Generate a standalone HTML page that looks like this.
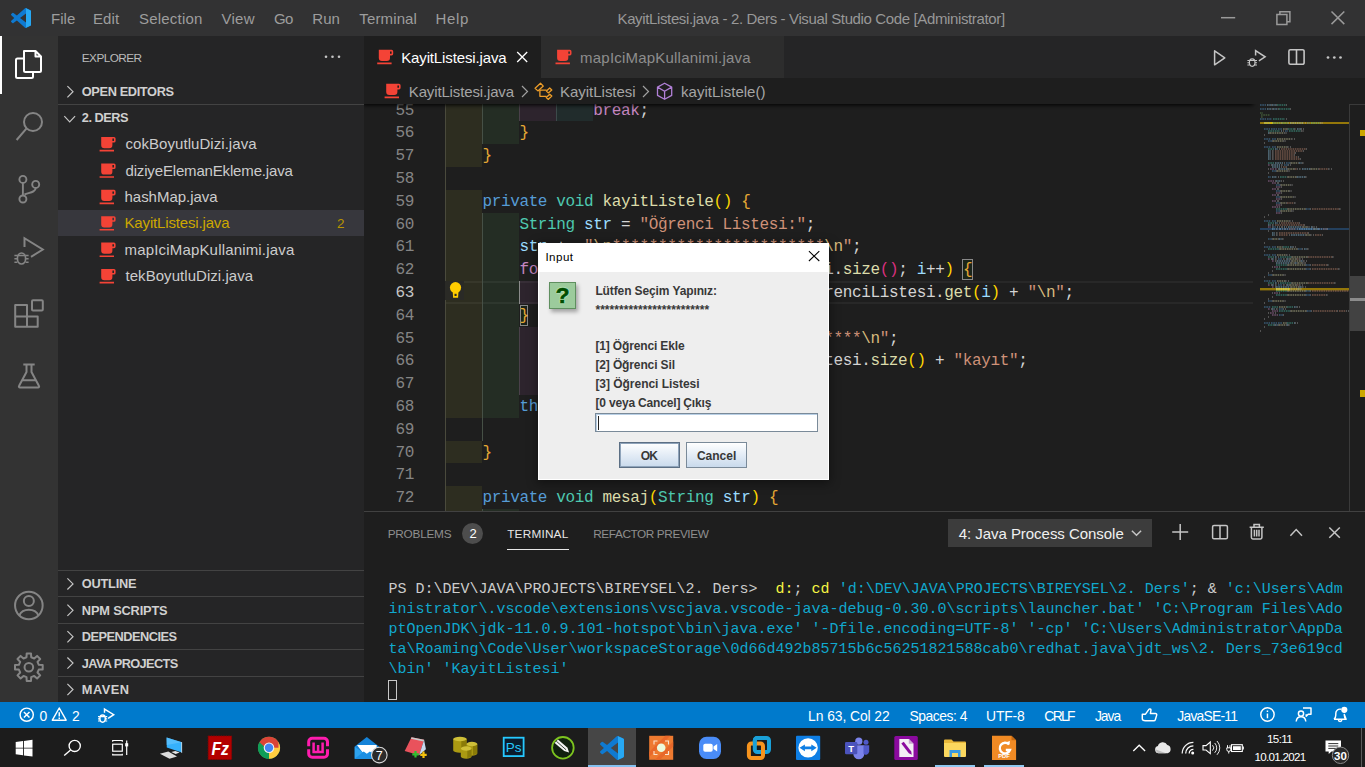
<!DOCTYPE html>
<html lang="tr"><head><meta charset="utf-8"><title>KayitListesi.java - 2. Ders - Visual Studio Code</title>
<style>
*{margin:0;padding:0;box-sizing:border-box}
html,body{width:1365px;height:767px;overflow:hidden;background:#1e1e1e}
body{position:relative;font-family:"Liberation Sans",sans-serif;color:#ccc}
.a{position:absolute}
.t{position:absolute;white-space:pre;line-height:20px;height:20px}
.m{font-family:"Liberation Mono",monospace}
svg{position:absolute;overflow:visible}
.cl{position:absolute;left:445.5px;height:22.8px;line-height:22.8px;font:16px "Liberation Mono",monospace;letter-spacing:-0.3656px;white-space:pre;color:#d4d4d4}
.ln{position:absolute;left:364px;width:50px;text-align:right;height:22.8px;line-height:22.8px;font:16px "Liberation Mono",monospace;letter-spacing:-0.3656px;color:#858585}
.k{color:#569cd6}.ty{color:#4ec9b0}.f{color:#dcdcaa}.v{color:#9cdcfe}.s{color:#ce9178}.e{color:#d7ba7d}.c{color:#c586c0}.b1{color:#ffd700}.br{color:#e6a935}.b2{color:#d9307f}.n{color:#b5cea8}
.tl{position:absolute;left:388.5px;height:20px;line-height:20px;font:15px "Liberation Mono",monospace;white-space:pre;color:#cccccc}
.cy{color:#11a8cd}.ye{color:#f5f543}
</style></head><body>
<div class="a" style="left:0px;top:0px;width:1365px;height:36px;background:#323233;"></div>
<div class="a" style="left:0px;top:36px;width:58px;height:666px;background:#333333;"></div>
<div class="a" style="left:0px;top:36px;width:2px;height:58px;background:#ffffff;"></div>
<div class="a" style="left:58px;top:36px;width:306px;height:666px;background:#252526;"></div>
<div class="a" style="left:58px;top:210px;width:306px;height:26px;background:#37373d;"></div>
<div class="a" style="left:58px;top:104px;width:306px;height:1px;background:#434343;"></div>
<div class="a" style="left:58px;top:570px;width:306px;height:1px;background:#434343;"></div>
<div class="a" style="left:58px;top:596px;width:306px;height:1px;background:#434343;"></div>
<div class="a" style="left:58px;top:623px;width:306px;height:1px;background:#434343;"></div>
<div class="a" style="left:58px;top:649px;width:306px;height:1px;background:#434343;"></div>
<div class="a" style="left:58px;top:676px;width:306px;height:1px;background:#434343;"></div>
<div class="a" style="left:364px;top:36px;width:1001px;height:42px;background:#252526;"></div>
<div class="a" style="left:364px;top:36px;width:177px;height:42px;background:#1e1e1e;"></div>
<div class="a" style="left:541px;top:36px;width:244px;height:42px;background:#2d2d2d;border-right:1px solid #252526"></div>
<div class="a" style="left:364px;top:78px;width:1001px;height:26px;background:#1e1e1e;"></div>
<div class="a" style="left:364px;top:104px;width:1001px;height:407px;background:#1e1e1e;"></div>
<div class="a" style="left:364px;top:511px;width:1001px;height:191px;background:#1e1e1e;border-top:1px solid #414141"></div>
<div class="a" style="left:0px;top:702px;width:1365px;height:26px;background:#007acc;"></div>
<div class="a" style="left:0px;top:728px;width:1365px;height:39px;background:#1c1c1c;"></div>
<div class="a" style="left:364px;top:104px;width:1001px;height:407px;overflow:hidden">
<div class="a" style="left:81.5px;top:177px;width:807.5px;height:23px;background:transparent;border-top:2px solid #282828;border-bottom:2px solid #282828"></div>
<div class="a" style="left:81.5px;top:-5px;width:36.94px;height:22px;background:rgba(255,255,64,.07);"></div>
<div class="a" style="left:118.44px;top:-5px;width:36.94px;height:22px;background:rgba(127,255,127,.07);"></div>
<div class="a" style="left:155.39px;top:-5px;width:36.94px;height:22px;background:rgba(255,127,255,.07);"></div>
<div class="a" style="left:192.33px;top:-5px;width:36.94px;height:22px;background:rgba(79,236,236,.07);"></div>
<div class="a" style="left:81.5px;top:17px;width:36.94px;height:23px;background:rgba(255,255,64,.07);"></div>
<div class="a" style="left:118.44px;top:17px;width:36.94px;height:23px;background:rgba(127,255,127,.07);"></div>
<div class="a" style="left:81.5px;top:40px;width:36.94px;height:23px;background:rgba(255,255,64,.07);"></div>
<div class="a" style="left:81.5px;top:86px;width:36.94px;height:23px;background:rgba(255,255,64,.07);"></div>
<div class="a" style="left:81.5px;top:109px;width:36.94px;height:22px;background:rgba(255,255,64,.07);"></div>
<div class="a" style="left:118.44px;top:109px;width:36.94px;height:22px;background:rgba(127,255,127,.07);"></div>
<div class="a" style="left:81.5px;top:131px;width:36.94px;height:23px;background:rgba(255,255,64,.07);"></div>
<div class="a" style="left:118.44px;top:131px;width:36.94px;height:23px;background:rgba(127,255,127,.07);"></div>
<div class="a" style="left:81.5px;top:154px;width:36.94px;height:23px;background:rgba(255,255,64,.07);"></div>
<div class="a" style="left:118.44px;top:154px;width:36.94px;height:23px;background:rgba(127,255,127,.07);"></div>
<div class="a" style="left:81.5px;top:177px;width:36.94px;height:23px;background:rgba(255,255,64,.07);"></div>
<div class="a" style="left:118.44px;top:177px;width:36.94px;height:23px;background:rgba(127,255,127,.07);"></div>
<div class="a" style="left:155.39px;top:177px;width:36.94px;height:23px;background:rgba(255,127,255,.07);"></div>
<div class="a" style="left:81.5px;top:200px;width:36.94px;height:23px;background:rgba(255,255,64,.07);"></div>
<div class="a" style="left:118.44px;top:200px;width:36.94px;height:23px;background:rgba(127,255,127,.07);"></div>
<div class="a" style="left:81.5px;top:223px;width:36.94px;height:22px;background:rgba(255,255,64,.07);"></div>
<div class="a" style="left:118.44px;top:223px;width:36.94px;height:22px;background:rgba(127,255,127,.07);"></div>
<div class="a" style="left:155.39px;top:223px;width:36.94px;height:22px;background:rgba(255,127,255,.07);"></div>
<div class="a" style="left:81.5px;top:245px;width:36.94px;height:23px;background:rgba(255,255,64,.07);"></div>
<div class="a" style="left:118.44px;top:245px;width:36.94px;height:23px;background:rgba(127,255,127,.07);"></div>
<div class="a" style="left:155.39px;top:245px;width:36.94px;height:23px;background:rgba(255,127,255,.07);"></div>
<div class="a" style="left:81.5px;top:268px;width:36.94px;height:23px;background:rgba(255,255,64,.07);"></div>
<div class="a" style="left:118.44px;top:268px;width:36.94px;height:23px;background:rgba(127,255,127,.07);"></div>
<div class="a" style="left:155.39px;top:268px;width:36.94px;height:23px;background:rgba(255,127,255,.07);"></div>
<div class="a" style="left:81.5px;top:291px;width:36.94px;height:23px;background:rgba(255,255,64,.07);"></div>
<div class="a" style="left:118.44px;top:291px;width:36.94px;height:23px;background:rgba(127,255,127,.07);"></div>
<div class="a" style="left:81.5px;top:337px;width:36.94px;height:22px;background:rgba(255,255,64,.07);"></div>
<div class="a" style="left:81.5px;top:382px;width:36.94px;height:23px;background:rgba(255,255,64,.07);"></div>
<div class="a" style="left:81.5px;top:405px;width:36.94px;height:23px;background:rgba(255,255,64,.07);"></div>
<div class="a" style="left:118.44px;top:405px;width:36.94px;height:23px;background:rgba(127,255,127,.07);"></div>
<div class="a" style="left:81.0px;top:-5px;width:1px;height:22px;background:#4a4a3c;"></div>
<div class="a" style="left:117.94px;top:-5px;width:1px;height:22px;background:#465046;"></div>
<div class="a" style="left:154.89px;top:-5px;width:1px;height:22px;background:#4a404a;"></div>
<div class="a" style="left:191.83px;top:-5px;width:1px;height:22px;background:#3c4a4a;"></div>
<div class="a" style="left:81.0px;top:17px;width:1px;height:23px;background:#4a4a3c;"></div>
<div class="a" style="left:117.94px;top:17px;width:1px;height:23px;background:#465046;"></div>
<div class="a" style="left:81.0px;top:40px;width:1px;height:23px;background:#4a4a3c;"></div>
<div class="a" style="left:81.0px;top:63px;width:1px;height:23px;background:#4a4a3c;"></div>
<div class="a" style="left:81.0px;top:86px;width:1px;height:23px;background:#4a4a3c;"></div>
<div class="a" style="left:81.0px;top:109px;width:1px;height:22px;background:#4a4a3c;"></div>
<div class="a" style="left:117.94px;top:109px;width:1px;height:22px;background:#465046;"></div>
<div class="a" style="left:81.0px;top:131px;width:1px;height:23px;background:#4a4a3c;"></div>
<div class="a" style="left:117.94px;top:131px;width:1px;height:23px;background:#465046;"></div>
<div class="a" style="left:81.0px;top:154px;width:1px;height:23px;background:#4a4a3c;"></div>
<div class="a" style="left:117.94px;top:154px;width:1px;height:23px;background:#465046;"></div>
<div class="a" style="left:81.0px;top:177px;width:1px;height:23px;background:#4a4a3c;"></div>
<div class="a" style="left:117.94px;top:177px;width:1px;height:23px;background:#465046;"></div>
<div class="a" style="left:154.89px;top:177px;width:1px;height:23px;background:#8a8a8a;"></div>
<div class="a" style="left:81.0px;top:200px;width:1px;height:23px;background:#4a4a3c;"></div>
<div class="a" style="left:117.94px;top:200px;width:1px;height:23px;background:#465046;"></div>
<div class="a" style="left:81.0px;top:223px;width:1px;height:22px;background:#4a4a3c;"></div>
<div class="a" style="left:117.94px;top:223px;width:1px;height:22px;background:#465046;"></div>
<div class="a" style="left:154.89px;top:223px;width:1px;height:22px;background:#4a404a;"></div>
<div class="a" style="left:81.0px;top:245px;width:1px;height:23px;background:#4a4a3c;"></div>
<div class="a" style="left:117.94px;top:245px;width:1px;height:23px;background:#465046;"></div>
<div class="a" style="left:154.89px;top:245px;width:1px;height:23px;background:#4a404a;"></div>
<div class="a" style="left:81.0px;top:268px;width:1px;height:23px;background:#4a4a3c;"></div>
<div class="a" style="left:117.94px;top:268px;width:1px;height:23px;background:#465046;"></div>
<div class="a" style="left:154.89px;top:268px;width:1px;height:23px;background:#4a404a;"></div>
<div class="a" style="left:81.0px;top:291px;width:1px;height:23px;background:#4a4a3c;"></div>
<div class="a" style="left:117.94px;top:291px;width:1px;height:23px;background:#465046;"></div>
<div class="a" style="left:81.0px;top:314px;width:1px;height:23px;background:#4a4a3c;"></div>
<div class="a" style="left:117.94px;top:314px;width:1px;height:23px;background:#465046;"></div>
<div class="a" style="left:81.0px;top:337px;width:1px;height:22px;background:#4a4a3c;"></div>
<div class="a" style="left:81.0px;top:359px;width:1px;height:23px;background:#4a4a3c;"></div>
<div class="a" style="left:81.0px;top:382px;width:1px;height:23px;background:#4a4a3c;"></div>
<div class="a" style="left:81.0px;top:405px;width:1px;height:23px;background:#4a4a3c;"></div>
<div class="a" style="left:117.94px;top:405px;width:1px;height:23px;background:#465046;"></div>
<div class="a" style="left:598.32px;top:154.5px;width:10.24px;height:21.8px;background:rgba(0,100,0,0.1);border:1px solid #888"></div>
<div class="a" style="left:155.99px;top:201px;width:8.04px;height:20.8px;background:rgba(0,100,0,0.1);border:1px solid #888"></div>
<div class="ln" style="left:0;top:-2.5px;color:#858585">55</div>
<div class="cl" style="left:81.5px;top:-2.5px">                <span class="c">break</span>;</div>
<div class="ln" style="left:0;top:19.5px;color:#858585">56</div>
<div class="cl" style="left:81.5px;top:19.5px">        <span class="br">}</span></div>
<div class="ln" style="left:0;top:42.5px;color:#858585">57</div>
<div class="cl" style="left:81.5px;top:42.5px">    <span class="br">}</span></div>
<div class="ln" style="left:0;top:65.5px;color:#858585">58</div>
<div class="ln" style="left:0;top:88.5px;color:#858585">59</div>
<div class="cl" style="left:81.5px;top:88.5px">    <span class="k">private</span> <span class="ty">void</span> <span class="f">kayitListele</span><span class="b1">()</span> <span class="br">{</span></div>
<div class="ln" style="left:0;top:111.5px;color:#858585">60</div>
<div class="cl" style="left:81.5px;top:111.5px">        <span class="ty">String</span> <span class="v">str</span> = <span class="s">"Öğrenci Listesi:"</span>;</div>
<div class="ln" style="left:0;top:133.5px;color:#858585">61</div>
<div class="cl" style="left:81.5px;top:133.5px">        <span class="v">str</span> += <span class="s">"</span><span class="e">\n</span><span class="s">***********************</span><span class="e">\n</span><span class="s">"</span>;</div>
<div class="ln" style="left:0;top:156.5px;color:#858585">62</div>
<div class="cl" style="left:81.5px;top:156.5px">        <span class="c">for</span> <span class="b1">(</span><span class="ty">int</span> <span class="v">i</span> = <span class="n">0</span>; <span class="v">i</span> &lt; ogrenciListesi.<span class="f">size</span><span class="b2">()</span>; <span class="v">i</span>++<span class="b1">)</span> <span class="br">{</span></div>
<div class="ln" style="left:0;top:179.5px;color:#c6c6c6">63</div>
<div class="cl" style="left:81.5px;top:179.5px">            <span class="v">str</span> += <span class="b1">(</span><span class="v">i</span> + <span class="n">1</span><span class="b1">)</span> + <span class="s">" --&gt; "</span> + ogrenciListesi.<span class="f">get</span><span class="b1">(</span><span class="v">i</span><span class="b1">)</span> + <span class="s">"</span><span class="e">\n</span><span class="s">"</span>;</div>
<div class="ln" style="left:0;top:202.5px;color:#858585">64</div>
<div class="cl" style="left:81.5px;top:202.5px">        <span class="br">}</span></div>
<div class="ln" style="left:0;top:225.5px;color:#858585">65</div>
<div class="cl" style="left:81.5px;top:225.5px">            <span class="v">str</span> += <span class="s">"*************************</span><span class="e">\n</span><span class="s">"</span>;</div>
<div class="ln" style="left:0;top:247.5px;color:#858585">66</div>
<div class="cl" style="left:81.5px;top:247.5px">            <span class="v">str</span> += <span class="s">"Toplam "</span> + ogrenciListesi.<span class="f">size</span><span class="b1">()</span> + <span class="s">"kayıt"</span>;</div>
<div class="ln" style="left:0;top:270.5px;color:#858585">67</div>
<div class="ln" style="left:0;top:293.5px;color:#858585">68</div>
<div class="cl" style="left:81.5px;top:293.5px">        <span class="k">this</span>.<span class="f">mesaj</span><span class="b1">(</span><span class="v">str</span><span class="b1">)</span>;</div>
<div class="ln" style="left:0;top:316.5px;color:#858585">69</div>
<div class="ln" style="left:0;top:339.5px;color:#858585">70</div>
<div class="cl" style="left:81.5px;top:339.5px">    <span class="br">}</span></div>
<div class="ln" style="left:0;top:361.5px;color:#858585">71</div>
<div class="ln" style="left:0;top:384.5px;color:#858585">72</div>
<div class="cl" style="left:81.5px;top:384.5px">    <span class="k">private</span> <span class="ty">void</span> <span class="f">mesaj</span><span class="b1">(</span><span class="ty">String</span> <span class="v">str</span><span class="b1">)</span> <span class="br">{</span></div>
<div class="ln" style="left:0;top:407.5px;color:#858585">73</div>
<div class="a" style="left:81px;top:177px;width:19px;height:19px;background:#2a2a26;"></div>
<svg style="left:81px;top:177px" width="19" height="19" viewBox="445 281 19 19"><circle cx="455.5" cy="287.6" r="5.6" fill="#ffcc00"/><path d="M452.700 290.500h5.800l-.4 7.200h-5z" fill="#ffcc00"/><rect x="454.500" y="293.800" width="2.100" height="2.200" fill="#2a2a26"/></svg>
<div class="a" style="left:0;top:-6px;width:888px;height:6px;box-shadow:0 0 4px 1px #000"></div>
</div>
<svg style="left:1260px;top:104px" width="89" height="240" viewBox="0 0 89 240">
<rect x="0" y="18" width="89" height="2" fill="#94770a"/><rect x="4" y="18" width="9" height="2" fill="#d8b000"/>
<rect x="0" y="184" width="89" height="2.4" fill="#94770a"/><rect x="16" y="184" width="14" height="2.4" fill="#d8b000"/>
<rect x="0" y="124" width="89" height="2" fill="#264f78" opacity=".7"/>
<path d="M0 1h6M0 5h6M0 15h6M7 15h5M4 19h7M47 19h3M4 25h6M11 25h6M18 25h4M25 27h3M4 35h7M12 35h4M8 37h4M4 43h7M12 43h4M26 59h4M24 61h4M12 67h4M8 73h3M16 81h4M16 87h4M16 93h4M16 99h4M46 105h4M16 107h4M4 117h7M12 117h4M13 123h3M8 135h4M4 143h7M12 143h4M38 145h4M4 151h7M12 151h4M18 155h4M46 161h4M46 165h4M8 171h4M4 177h7M12 177h4M18 181h4M46 187h4M46 191h4M8 197h4M4 203h7M19 205h4M47 207h4M19 211h4M4 219h6M11 219h6M18 219h4" stroke="#569cd6" stroke-width="1.1" opacity=".7" stroke-dasharray="1.6 .7" fill="none"/>
<path d="M8 61h2M10 65h4M15 65h2M8 77h6M12 79h4M16 83h5M12 85h4M16 89h5M12 91h4M16 95h5M12 97h4M16 101h5M12 103h7M16 109h5M8 123h3M8 155h2M12 157h2M14 163h4M8 181h2M12 183h2M14 189h4M8 205h2M12 207h6M10 209h4M12 211h6" stroke="#c586c0" stroke-width="1.1" opacity=".7" stroke-dasharray="1.6 .7" fill="none"/>
<path d="M17 1h9M19 5h11M13 15h12M12 19h9M22 19h6M51 19h9M28 25h6M8 27h12M29 27h12M8 45h6M8 59h6M20 73h7M16 105h11M8 119h6M23 143h6M8 145h11M8 153h6M20 153h11M16 161h11M16 165h11M8 179h6M20 179h11M16 187h11M16 191h11M12 203h6M27 203h6M19 207h11M27 219h6M8 221h6" stroke="#4ec9b0" stroke-width="1.1" opacity=".7" stroke-dasharray="1.6 .7" fill="none"/>
<path d="M23 25h4M10 29h14M17 35h14M13 37h10M17 43h10M31 59h7M28 65h6M51 65h7M17 67h10M28 73h8M21 81h9M21 87h8M21 93h12M21 99h5M28 105h17M21 107h10M17 117h12M43 123h4M54 125h3M46 131h4M13 135h5M17 143h5M20 145h17M17 151h9M32 153h15M30 155h6M32 157h8M31 159h3M38 159h4M28 161h17M28 165h17M13 171h10M17 177h8M32 179h15M30 181h6M31 183h8M31 185h6M28 187h17M28 191h17M13 197h10M19 203h7M31 207h15M23 219h3M19 221h7" stroke="#dcdcaa" stroke-width="1.1" opacity=".7" stroke-dasharray="1.6 .7" fill="none"/>
<path d="M7 1h4M12 1h4M7 5h5M13 5h5M30 19h14M37 25h4M21 27h1M8 29h1M15 45h3M8 47h3M8 49h3M8 51h3M8 53h3M8 55h3M15 59h8M39 59h3M12 61h8M12 63h8M19 65h8M42 65h8M12 73h5M37 73h8M16 77h5M15 119h3M8 121h3M17 123h1M24 123h1M28 123h14M51 123h1M12 125h3M20 125h1M39 125h14M58 125h1M12 129h3M12 131h3M31 131h14M19 135h3M30 143h3M44 145h3M15 153h2M12 155h2M27 155h2M17 157h14M41 157h2M16 159h14M35 159h2M15 179h2M12 181h2M27 181h2M16 183h14M40 183h2M16 185h14M38 185h2M34 203h3M12 205h3M34 219h1M15 221h3M27 221h1" stroke="#9cdcfe" stroke-width="1.1" opacity=".7" stroke-dasharray="1.6 .7" fill="none"/>
<path d="M21 45h25M15 47h28M15 49h20M15 51h19M15 53h23M15 55h25M23 63h3M35 65h2M59 65h9M27 99h7M52 105h27M21 119h18M15 121h29M29 125h7M63 125h4M19 129h29M19 131h9M55 131h7M48 153h24M37 155h2M52 161h15M52 165h26M48 179h26M37 181h2M52 187h37M52 191h14M53 207h24M79 207h7" stroke="#ce9178" stroke-width="1.1" opacity=".7" stroke-dasharray="1.6 .7" fill="none"/>
<path d="M11 1h1M16 1h1M26 1h1M12 5h1M18 5h1M30 5h1M26 15h1M21 19h1M28 19h1M45 19h1M60 19h3M27 25h1M34 25h2M41 25h1M43 25h1M23 27h1M41 27h3M9 29h1M24 29h3M4 31h1M31 35h2M34 35h1M12 37h1M23 37h3M4 39h1M27 43h2M30 43h1M19 45h1M46 45h1M12 47h2M43 47h1M12 49h2M35 49h1M12 51h2M34 51h1M12 53h2M38 53h1M12 55h2M40 55h1M24 59h1M30 59h1M38 59h1M42 59h2M11 61h1M21 61h2M28 61h1M30 61h1M21 63h1M26 63h1M8 65h1M18 65h1M27 65h1M34 65h1M37 65h1M39 65h2M50 65h1M58 65h1M68 65h2M71 65h1M16 67h1M27 67h3M8 69h1M18 73h1M27 73h1M36 73h1M45 73h2M15 77h1M21 77h1M23 77h1M17 79h1M18 79h1M20 81h1M30 81h3M21 83h1M17 85h1M18 85h1M20 87h1M29 87h3M21 89h1M17 91h1M18 91h1M20 93h1M33 93h3M21 95h1M17 97h1M18 97h1M20 99h1M26 99h1M34 99h2M21 101h1M19 103h1M27 105h1M45 105h1M50 105h1M79 105h2M20 107h1M31 107h3M21 109h1M8 111h1M4 113h1M29 117h2M32 117h1M19 119h1M39 119h1M12 121h2M44 121h1M12 123h1M19 123h1M21 123h1M22 123h1M26 123h1M42 123h1M47 123h3M52 123h3M56 123h1M16 125h2M19 125h1M22 125h1M24 125h1M25 125h1M27 125h1M37 125h1M53 125h1M57 125h1M59 125h1M61 125h1M67 125h1M8 127h1M16 129h2M48 129h1M16 131h2M29 131h1M45 131h1M50 131h2M53 131h1M62 131h1M12 135h1M18 135h1M22 135h2M4 139h1M22 143h1M33 143h1M35 143h1M19 145h1M37 145h1M42 145h1M47 145h2M4 147h1M26 151h2M29 151h1M18 153h1M31 153h1M47 153h1M72 153h2M11 155h1M15 155h2M23 155h2M26 155h1M29 155h1M36 155h1M39 155h2M42 155h1M15 157h2M31 157h1M40 157h1M43 157h2M46 157h1M30 159h1M34 159h1M37 159h1M42 159h4M27 161h1M45 161h1M50 161h1M67 161h2M12 163h1M19 163h1M27 165h1M45 165h1M50 165h1M78 165h2M12 167h1M8 169h1M12 171h1M23 171h3M4 173h1M25 177h2M28 177h1M18 179h1M31 179h1M47 179h1M74 179h2M11 181h1M15 181h2M23 181h2M26 181h1M29 181h1M36 181h1M39 181h2M42 181h1M15 183h1M30 183h1M39 183h1M42 183h2M45 183h1M30 185h1M37 185h1M40 185h2M27 187h1M45 187h1M50 187h1M12 189h1M19 189h1M27 191h1M45 191h1M50 191h1M66 191h2M12 193h1M8 195h1M12 197h1M23 197h3M4 199h1M26 203h1M37 203h1M39 203h1M11 205h1M16 205h2M23 205h1M25 205h1M30 207h1M46 207h1M51 207h1M77 207h1M86 207h1M88 207h1M8 209h1M15 209h1M23 211h1M8 213h1M4 215h1M26 219h1M35 219h1M37 219h1M14 221h1M18 221h1M26 221h1M28 221h2M4 223h1M0 227h1" stroke="#b4b4b4" stroke-width="1.1" opacity=".7" stroke-dasharray="1.6 .7" fill="none"/>
<path d="M0 9h3M1 11h9M1 13h2" stroke="#6a9955" stroke-width="1.1" opacity=".7" stroke-dasharray="1.6 .7" fill="none"/>
</svg>
<div class="a" style="left:1349px;top:104px;width:16px;height:407px;background:#1e1e1e;border-left:1px solid #3a3a3a;border-top:1px solid #3a3a3a"></div>
<div class="a" style="left:1350px;top:275.6px;width:15px;height:55.2px;background:#424242;"></div>
<div class="a" style="left:1350px;top:298px;width:15px;height:2.5px;background:#8c8c8c;"></div>
<div class="a" style="left:1360.4px;top:130.4px;width:4.6px;height:5.4px;background:#cca700;"></div>
<div class="a" style="left:1360.4px;top:390.2px;width:4.6px;height:6.7px;background:#cca700;"></div>
<div class="a" style="left:461.9px;top:522.9px;width:21.4px;height:21.4px;background:#4d4d4d;border-radius:11px"></div>
<div class="a" style="left:507.2px;top:549px;width:61.5px;height:1px;background:#e7e7e7;"></div>
<div class="a" style="left:948px;top:519px;width:204px;height:28px;background:#3c3c3c;"></div>
<div class="tl" style="top:581px">PS D:\DEV\JAVA\PROJECTS\BIREYSEL\2. Ders&gt;  <span class="ye">d:</span>; <span class="ye">cd</span> <span class="cy">'d:\DEV\JAVA\PROJECTS\BIREYSEL\2. Ders'</span>; &amp; <span class="cy">'c:\Users\Adm</span></div>
<div class="tl" style="top:601px"><span class="cy">inistrator\.vscode\extensions\vscjava.vscode-java-debug-0.30.0\scripts\launcher.bat' 'C:\Program Files\Ado</span></div>
<div class="tl" style="top:621px"><span class="cy">ptOpenJDK\jdk-11.0.9.101-hotspot\bin\java.exe' '-Dfile.encoding=UTF-8' '-cp' 'C:\Users\Administrator\AppDa</span></div>
<div class="tl" style="top:641px"><span class="cy">ta\Roaming\Code\User\workspaceStorage\0d66d492b85715b6c56251821588cab0\redhat.java\jdt_ws\2. Ders_73e619cd</span></div>
<div class="tl" style="top:661px"><span class="cy">\bin' 'KayitListesi'</span></div>
<div class="a" style="left:388px;top:680px;width:9px;height:20px;background:transparent;border:1px solid #c8c8c8"></div>
<div class="a" style="left:588px;top:728px;width:48px;height:39px;background:#464646;"></div>
<div class="a" style="left:588px;top:765.4px;width:48px;height:1.6px;background:#85c1f0;"></div>
<div class="a" style="left:935.2px;top:765.4px;width:40.3px;height:1.6px;background:#8fc8f0;"></div>
<div class="a" style="left:984.3px;top:765.4px;width:39.7px;height:1.6px;background:#8fc8f0;"></div>
<div class="a" style="left:1361px;top:728px;width:1px;height:39px;background:#5a5a5a;"></div>
<svg class="a" style="left:0;top:0" width="1365" height="767" viewBox="0 0 1365 767" fill="none" font-family="Liberation Sans, sans-serif">
<path d="M15.700 742l7.300-1v6.700h-7.300zM23.900 740.900l8.600-1.200v8h-8.600zM15.700 748.600h7.300v6.700l-7.300-1zM23.900 748.600h8.600v8l-8.600-1.200z" fill="#fff"/>
<g stroke="#fff" stroke-width="1.350"><circle cx="74.700" cy="745.900" r="5.600"/><path d="M70.600 749.900L64.200 755.600"/></g>
<g stroke="#fff" stroke-width="1.200"><rect x="112.700" y="744.200" width="9.600" height="7"/><path d="M112.700 741.700v-1.200h9.600v1.200M112.700 753.700v1.200h9.600v-1.200M126.700 740.500v14.400"/></g><rect x="125.200" y="743.200" width="3" height="3.200" fill="#fff"/>
<path d="M166.600 737.400l15.200 4.800v10.400l-15-5z" fill="#35b0fb"/><path d="M166.600 737.400l15.200 4.800-15.100 2.800z" fill="#5cc1fc" opacity=".8"/><path d="M181.300 742v10.600l.8.300v-10.600z" fill="#d9e6ee"/><path d="M171.300 752.100l4-1.100 4.300 1.600-3.900 1.300z" fill="#e6e6e6"/><path d="M159.900 753.700l8.400-2.100 8.700 5-7.500 2.100z" fill="#dcdcdc"/>
<rect x="208.200" y="736" width="23.400" height="23.500" fill="#b30000" stroke="#8e0000" stroke-width="1" stroke-dasharray="1.500 1"/><text x="211.500" y="755" font-size="19" font-weight="bold" font-style="italic" fill="#fff" textLength="17.500" lengthAdjust="spacingAndGlyphs">Fz</text>
<circle cx="269" cy="747.8" r="11" fill="#4caf50"/><path d="M269 747.8L259.47 742.3A11 11 0 0 1 278.53 742.3z" fill="#db4437"/><path d="M269 747.8L278.53 742.3A11 11 0 0 1 269 758.8z" fill="#ffcd40"/><path d="M269 747.8L259.47 742.3A11 11 0 0 0 269 758.8z" fill="#0f9d58"/><path d="M259.47 742.3h19.060v5.500h-13z" fill="#db4437"/><circle cx="269" cy="747.8" r="5.300" fill="#f1f1f1"/><circle cx="269" cy="747.8" r="4.200" fill="#4285f4"/>
<g stroke="#ff1cae" stroke-width="3"><path d="M308.700 746.300v-4.500a3.500 3.500 0 0 1 3.500-3.500h11.800a3.500 3.500 0 0 1 3.500 3.500v4.500M308.700 749.300v4.500a3.500 3.500 0 0 0 3.500 3.500h11.800a3.500 3.500 0 0 0 3.500-3.500v-4.500"/><path d="M313.600 742.500v9.500h9v-9.500M318.100 745v7" stroke-width="2.500"/></g>
<path d="M354.700 746.500l12.100-9.500 12.100 9.500v12.300h-24.200z" fill="#1583d8"/><path d="M357 745h19.600v8l-9.800 5z" fill="#fff"/><path d="M354.700 746.800l12.100 8.200 12.100-8.200v12h-24.200z" fill="#2ea3ee"/><path d="M354.700 758.800l9-7.200 3.100 2.100 3.100-2.100 9 7.200z" fill="#1a8fe3"/>
<circle cx="379.300" cy="755.100" r="7.800" fill="#2b2b2b" stroke="#d8d8d8" stroke-width="1.100"/><text x="379.300" y="759.600" font-size="12.500" fill="#fff" text-anchor="middle">7</text>
<path d="M411.500 737.200l12.600 2.600-5 15.500-14.400-4.200z" fill="#e9525c"/><path d="M411.500 737.200l12.600 2.600-.5 1.600-12.700-2.600z" fill="#c9c9c9"/><path d="M424.100 739.800l1.800 9.500-6.800 6z" fill="#c7d8ee"/><path d="M412.300 754.300h6.400M415.500 751.100v6.400" stroke="#2fbf2f" stroke-width="2.200"/><path d="M420.300 754.800h6.400M423.500 751.600v6.400" stroke="#f4c20d" stroke-width="2.200"/>
<path d="M453.2 739v11.5a6.75 2.2 0 0 0 13.5 0v-11.5z" fill="#ab9a12"/><path d="M461.3 739v13.0a6.75 2.2 0 0 0 5.4 -1.500v-11.5z" fill="#6f6200" opacity=".55"/><ellipse cx="459.95" cy="739" rx="6.75" ry="2.2" fill="#cfc038"/>
<path d="M466.5 744v9.5a5.4 2.2 0 0 0 10.8 0v-9.5z" fill="#ab9a12"/><path d="M472.98 744v11.0a5.4 2.2 0 0 0 4.32 -1.500v-9.5z" fill="#6f6200" opacity=".55"/><ellipse cx="471.9" cy="744" rx="5.4" ry="2.2" fill="#cfc038"/>
<path d="M460.8 748.5v8a5.4 2.2 0 0 0 10.8 0v-8z" fill="#ab9a12"/><path d="M467.28000000000003 748.5v9.5a5.4 2.2 0 0 0 4.32 -1.500v-8z" fill="#6f6200" opacity=".55"/><ellipse cx="466.2" cy="748.5" rx="5.4" ry="2.2" fill="#cfc038"/>
<rect x="503.700" y="737.700" width="19.900" height="18.400" fill="#0b1c2c" stroke="#26c9ff" stroke-width="1.800"/><text x="513.650" y="752" font-size="13.500" fill="#26c9ff" text-anchor="middle">Ps</text>
<circle cx="562.900" cy="747.800" r="10.800" fill="#10200f" stroke="#7dc41f" stroke-width="1.800"/><path d="M554.600 743l3.400-3.600 9.500 8.300 1.600 4.700-4.900-1.300z" fill="#f2f2f2"/><path d="M556.300 741.200l9.800 8.600" stroke="#10200f" stroke-width=".8"/>
<g transform="translate(600 736) scale(0.2400)"><path d="M96.5 10.8 75.9.9a6.2 6.2 0 0 0-7.1 1.2L29.4 38 12.2 25a4.2 4.2 0 0 0-5.3.2L1.4 30.3a4.2 4.2 0 0 0 0 6.2L16.2 50 1.4 63.5a4.2 4.2 0 0 0 0 6.2l5.5 5a4.2 4.2 0 0 0 5.3.3l17.2-13 39.4 35.9a6.2 6.2 0 0 0 7.1 1.2l20.6-9.9a6.2 6.2 0 0 0 3.500-5.6V16.400a6.200 6.200 0 0 0-3.500-5.600ZM75 72.700 45.100 50 75 27.300Z" fill="#0f7ad1"/><path d="M75.900 .9 96.500 10.800a6.200 6.200 0 0 1 3.500 5.600v67.200a6.200 6.200 0 0 1-3.500 5.600l-20.600 9.900a6.200 6.200 0 0 1-3.400.5c1.500-.400 2.500-1.800 2.500-3.400V3.800c0-1.600-1-3-2.500-3.400a6.200 6.200 0 0 1 3.400.5z" fill="#27a8f3"/></g>
<rect x="649.200" y="735.800" width="24" height="24" fill="#ee7a30"/><path d="M649.200 752l16.200-16.200h5l-21.200 21.200zM655 759.800l18.200-18.200v5l-13.200 13.200z" fill="#e8682a"/><circle cx="661.200" cy="747.800" r="4.300" fill="#ecfbdc"/><path d="M654 744.500v-3.500h3.500M665 741h3.500v3.500M668.500 751v3.500h-3.500M657.500 754.500h-3.500v-3.500" stroke="#fbe3cf" stroke-width="1.100"/>
<rect x="699" y="736.800" width="22" height="22.200" rx="7.500" fill="#4a8cf7"/><rect x="703.300" y="743.700" width="9.400" height="8" rx="1.800" fill="#fff"/><path d="M713.500 746.600l3.700-2.500v7.400l-3.700-2.500z" fill="#fff"/>
<rect x="754.800" y="738" width="14.200" height="14" rx="2.500" stroke="#1aa0d8" stroke-width="4"/><rect x="748.900" y="743.500" width="14.100" height="14.500" rx="2.500" stroke="#f7941d" stroke-width="4"/><path d="M754.800 746v-5.500a2.500 2.500 0 0 1 2.500-2.500h5" stroke="#1aa0d8" stroke-width="4"/>
<rect x="796" y="735.700" width="24.200" height="24.300" rx="1" fill="#0e7ee4"/><circle cx="808.100" cy="747.850" r="9.700" fill="#fff"/><path d="M799.500 747.850l5.400-3.300v2h6.400v-2l5.400 3.300-5.400 3.300v-2h-6.400v2z" fill="#0e7ee4"/>
<circle cx="858.800" cy="741.200" r="3.600" fill="#7b83eb"/><circle cx="866" cy="742.300" r="2.500" fill="#5059c9"/><path d="M852.500 745.300h11.800v8.500a5.500 5.500 0 0 1-11 0z" fill="#7b83eb"/><path d="M863.500 745.300h5.700v6.200a3.600 3.600 0 0 1-5.700 2.500z" fill="#5059c9"/><rect x="845" y="742" width="12.300" height="12.300" rx="1.200" fill="#4b53bc"/><text x="851.150" y="752" font-size="9.500" font-weight="bold" fill="#fff" text-anchor="middle">T</text>
<rect x="894.300" y="735.900" width="23.500" height="24.100" rx="1.500" fill="#8b0a9e"/><path d="M899.300 739h9.500l4.700 4.700v13.300h-14.200z" fill="#f4eef5"/><path d="M908.800 739v4.700h4.700z" fill="#c9a3cf"/><path d="M901.300 743.500l2.400-1.800 7.500 9.800.6 3.200-3-1.400z" fill="#8b0a9e"/>
<path d="M944 740.500a1 1 0 0 1 1-1h6.500l2 2h11.500a1 1 0 0 1 1 1v13.500h-22z" fill="#e9b83a"/><path d="M944 743h22v13a1 1 0 0 1-1 1h-20a1 1 0 0 1-1-1z" fill="#fbd75e"/><path d="M949.500 757v-7h11v7h-2.500v-4h-6v4z" fill="#3a9ae0"/>
<path d="M992 735.700h19.500l4.600 4.600v19.700h-24.100z" fill="#f08a24"/><path d="M1011.500 735.700l4.600 4.600h-4.600z" fill="#c76a10"/><path d="M1009 744.500a5.300 5.300 0 1 0 1 5.500h-4.200" stroke="#fff" stroke-width="2.300"/><path d="M1005.500 742.500l4.500-1.500-.8 4z" fill="#fff"/><text x="1004" y="758.300" font-size="5.800" font-weight="bold" fill="#fff" text-anchor="middle">PDF</text>
<path d="M1133.300 751l5.900-5.800 5.900 5.800" stroke="#fff" stroke-width="1.300"/>
<path d="M1158.500 753.200a3.600 3.600 0 0 1-.6-7.100 5 5 0 0 1 9.400-1 4.200 4.200 0 0 1 .4 8.100z" fill="#e8e8e8"/><path d="M1156 749.500l10 3.700h-7.500a3.600 3.600 0 0 1-2.500-3.700z" fill="#bdbdbd"/>
<g stroke="#fff" stroke-width="1.250"><path d="M1182.200 753.500a11.200 11.200 0 0 1 11.200-11.200" opacity=".95"/><path d="M1185.700 753.500a7.700 7.700 0 0 1 7.700-7.700"/><path d="M1189.200 753.500a4.200 4.200 0 0 1 4.200-4.200"/></g><circle cx="1192.700" cy="753" r="1.500" fill="#fff"/>
<path d="M1203 745.600h3l4.300-3.600v11.600l-4.300-3.600h-3z" stroke="#fff" stroke-width="1.100"/><path d="M1212.500 745.200a3.800 3.800 0 0 1 0 5.400M1214.700 743a7 7 0 0 1 0 9.800M1217 741a10 10 0 0 1 0 13.800" stroke="#fff" stroke-width="1" opacity=".9"/>
<rect x="1231.500" y="744.700" width="10.800" height="6.800" stroke="#fff" stroke-width="1.100"/><path d="M1243.200 746.600v3" stroke="#fff" stroke-width="1.300"/><rect x="1233" y="746.200" width="7.800" height="3.800" fill="#fff"/><path d="M1227.500 745.200v2.600M1230 745.200v2.600M1226.800 747.800h3.900v1.700a1.950 1.950 0 0 1-3.900 0zM1228.750 751.500v2" stroke="#fff" stroke-width="1"/>
<path d="M1325.500 740.500h15.500v11h-9.500l-2.800 2.600v-2.600h-3.200z" fill="#fff"/><path d="M1328.300 743.600h10M1328.300 746h10M1328.300 748.400h10" stroke="#1c1c1c" stroke-width=".9"/>
<circle cx="1340.500" cy="755.300" r="8.200" fill="#2a2a2a" stroke="#8a8a8a" stroke-width="1"/><text x="1340.500" y="759.500" font-size="11.500" font-weight="bold" fill="#fff" text-anchor="middle">30</text>
</svg>
<svg class="a" style="left:0;top:0" width="1365" height="767" viewBox="0 0 1365 767" fill="none">
<g transform="translate(11 8) scale(0.2000)"><path d="M96.5 10.8 75.9.9a6.2 6.2 0 0 0-7.1 1.2L29.4 38 12.2 25a4.2 4.2 0 0 0-5.3.2L1.4 30.3a4.2 4.2 0 0 0 0 6.2L16.2 50 1.4 63.5a4.2 4.2 0 0 0 0 6.2l5.5 5a4.2 4.2 0 0 0 5.3.3l17.2-13 39.4 35.9a6.2 6.2 0 0 0 7.1 1.2l20.6-9.9a6.2 6.2 0 0 0 3.500-5.6V16.400a6.200 6.200 0 0 0-3.500-5.600ZM75 72.700 45.100 50 75 27.300Z" fill="#0f7ad1"/><path d="M75.900 .9 96.500 10.800a6.200 6.200 0 0 1 3.500 5.600v67.200a6.200 6.200 0 0 1-3.500 5.600l-20.600 9.900a6.200 6.200 0 0 1-3.400.5c1.500-.400 2.500-1.800 2.500-3.400V3.800c0-1.600-1-3-2.500-3.400a6.200 6.200 0 0 1 3.400.5z" fill="#27a8f3"/></g>
<path d="M1221 17.7H1235.200" stroke="#9a9a9a" stroke-width="1.5"/>
<path d="M1276.900 14.600h10v10h-10zM1279.900 14.600v-2.900h10v10h-2.900" stroke="#9a9a9a" stroke-width="1.5"/>
<path d="M1331.500 11.500l12.800 12.600M1344.300 11.500l-12.800 12.600" stroke="#9a9a9a" stroke-width="1.5"/>
<g stroke="#ffffff" stroke-width="2" stroke-linejoin="round"><path d="M24 51H35.500L41 56.500V70.500a1.500 1.500 0 0 1-1.500 1.500H25.500a1.500 1.500 0 0 1-1.500-1.500ZM35.500 51V56.500H41"/><path d="M24 58.500H17.500a1.500 1.500 0 0 0-1.500 1.500V76.500a1.500 1.500 0 0 0 1.500 1.500H31.500a1.500 1.500 0 0 0 1.500-1.500V72"/></g>
<g stroke="#858585" stroke-width="2"><circle cx="33" cy="122" r="9"/><path d="M26.600 128.400L16.600 140"/></g>
<g stroke="#858585" stroke-width="1.9"><circle cx="22.900" cy="179.400" r="3.500"/><circle cx="35.700" cy="184.400" r="3.500"/><circle cx="22.900" cy="199" r="3.500"/><path d="M22.900 183V195.400M35.700 188C35.700 192.500 29 192.600 24.500 194.500"/></g>
<path d="M24.500 247V238.200L42.800 249.500 31 256.800" stroke="#858585" stroke-width="2" stroke-linejoin="miter"/>
<ellipse cx="21.5" cy="258.5" rx="4.1" ry="5.5" fill="none" stroke="#858585" stroke-width="1.7"/><path d="M17.4 255.5h-3.0M25.6 255.5h3.0M17.4 258.8h-3.0M25.6 258.8h3.0M17.4 262.2h-3.0M25.6 262.2h3.0M17.8 255.5h7.5" stroke="#858585" stroke-width="1.44" fill="none"/>
<g stroke="#858585" stroke-width="2" stroke-linejoin="round"><path d="M15.200 305.100H27V316.500H37.700V326.800H15.200ZM15.200 316.500H27V326.800"/><rect x="32" y="300.200" width="10.800" height="10.200" rx="1"/></g>
<path d="M23.300 364.400H34.700M26.500 364.400V372L19 386a1 1 0 0 0 .9 1.500H38.100a1 1 0 0 0 .9-1.500L31.500 372V364.400M22.300 380.300H35.700" stroke="#858585" stroke-width="2" stroke-linejoin="round"/>
<g stroke="#858585" stroke-width="2"><circle cx="28.850" cy="605.500" r="13.800"/><circle cx="28.850" cy="601" r="5"/><path d="M19.300 615.300a10.200 8.500 0 0 1 19.100 0"/></g>
<path d="M26.7 653.4 L31.0 653.4 L31.2 657.3 L34.2 658.5 L37.1 655.9 L40.2 659.0 L37.5 661.9 L38.8 664.8 L42.7 665.0 L42.7 669.4 L38.8 669.6 L37.5 672.5 L40.2 675.4 L37.1 678.5 L34.2 675.9 L31.2 677.1 L31.0 681.0 L26.7 681.0 L26.5 677.1 L23.5 675.9 L20.6 678.5 L17.5 675.4 L20.2 672.5 L18.9 669.6 L15.0 669.4 L15.0 665.0 L18.9 664.8 L20.2 661.9 L17.5 659.0 L20.6 655.9 L23.5 658.5 L26.5 657.3Z" stroke="#858585" stroke-width="2" stroke-linejoin="round"/><circle cx="28.850" cy="667.200" r="4.300" stroke="#858585" stroke-width="2"/>
<g fill="#c5c5c5"><circle cx="326" cy="56.700" r="1.300"/><circle cx="332.500" cy="56.700" r="1.300"/><circle cx="339" cy="56.700" r="1.300"/></g>
<path d="M67.4 86.10000000000001l5.600 5.600-5.600 5.600" stroke="#c5c5c5" stroke-width="1.2"/>
<path d="M64.3 116.2l5.400 5.600 5.400-5.600" stroke="#c5c5c5" stroke-width="1.200"/>
<path d="M67.4 578.3l5.600 5.600-5.600 5.600" stroke="#c5c5c5" stroke-width="1.2"/>
<path d="M67.4 604.6999999999999l5.600 5.600-5.600 5.600" stroke="#c5c5c5" stroke-width="1.2"/>
<path d="M67.4 631.1l5.600 5.600-5.600 5.600" stroke="#c5c5c5" stroke-width="1.2"/>
<path d="M67.4 657.5l5.600 5.600-5.600 5.600" stroke="#c5c5c5" stroke-width="1.2"/>
<path d="M67.4 683.9l5.600 5.600-5.600 5.600" stroke="#c5c5c5" stroke-width="1.2"/>
<path transform="translate(98 134.6) scale(0.800)" d="M2 21h18v-2H2M20 8h-2V5h2m0-2H4v10a4 4 0 0 0 4 4h6a4 4 0 0 0 4-4v-3h2a2 2 0 0 0 2-2V5a2 2 0 0 0-2-2z" fill="#f44336"/>
<path transform="translate(98 161.0) scale(0.800)" d="M2 21h18v-2H2M20 8h-2V5h2m0-2H4v10a4 4 0 0 0 4 4h6a4 4 0 0 0 4-4v-3h2a2 2 0 0 0 2-2V5a2 2 0 0 0-2-2z" fill="#f44336"/>
<path transform="translate(98 187.39999999999998) scale(0.800)" d="M2 21h18v-2H2M20 8h-2V5h2m0-2H4v10a4 4 0 0 0 4 4h6a4 4 0 0 0 4-4v-3h2a2 2 0 0 0 2-2V5a2 2 0 0 0-2-2z" fill="#f44336"/>
<path transform="translate(98 213.79999999999998) scale(0.800)" d="M2 21h18v-2H2M20 8h-2V5h2m0-2H4v10a4 4 0 0 0 4 4h6a4 4 0 0 0 4-4v-3h2a2 2 0 0 0 2-2V5a2 2 0 0 0-2-2z" fill="#f44336"/>
<path transform="translate(98 240.2) scale(0.800)" d="M2 21h18v-2H2M20 8h-2V5h2m0-2H4v10a4 4 0 0 0 4 4h6a4 4 0 0 0 4-4v-3h2a2 2 0 0 0 2-2V5a2 2 0 0 0-2-2z" fill="#f44336"/>
<path transform="translate(98 266.6) scale(0.800)" d="M2 21h18v-2H2M20 8h-2V5h2m0-2H4v10a4 4 0 0 0 4 4h6a4 4 0 0 0 4-4v-3h2a2 2 0 0 0 2-2V5a2 2 0 0 0-2-2z" fill="#f44336"/>
<path transform="translate(375.6 47.4) scale(0.800)" d="M2 21h18v-2H2M20 8h-2V5h2m0-2H4v10a4 4 0 0 0 4 4h6a4 4 0 0 0 4-4v-3h2a2 2 0 0 0 2-2V5a2 2 0 0 0-2-2z" fill="#f44336"/>
<path transform="translate(553.9 47.4) scale(0.800)" d="M2 21h18v-2H2M20 8h-2V5h2m0-2H4v10a4 4 0 0 0 4 4h6a4 4 0 0 0 4-4v-3h2a2 2 0 0 0 2-2V5a2 2 0 0 0-2-2z" fill="#f44336"/>
<path d="M517.200 52l10 10M527.200 52l-10 10" stroke="#ffffff" stroke-width="1.300"/>
<path transform="translate(383 81.4) scale(0.800)" d="M2 21h18v-2H2M20 8h-2V5h2m0-2H4v10a4 4 0 0 0 4 4h6a4 4 0 0 0 4-4v-3h2a2 2 0 0 0 2-2V5a2 2 0 0 0-2-2z" fill="#f44336"/>
<path d="M522 86l5.500 5.500-5.500 5.500M643 86l5.500 5.500-5.500 5.500" stroke="#a0a0a0" stroke-width="1.200"/>
<g stroke="#ee9d28" stroke-width="1.300" stroke-linejoin="round"><path d="M540.500 83.300l2.800 2.800-5.400 4.800-2.800-2.700z"/><path d="M539.900 90V96.300H546.600M539.900 90.100H546.600"/><path d="M549.700 88l2.100 2-3.500 2.900-1.800-1.900zM549.700 94.200l2.100 1.900-3.600 3.300-1.900-1.900z"/></g>
<path d="M664.600 83.200l7.100 3.900v8.300l-7.100 3.900-7.100-3.900v-8.300zM657.500 87.100l7.100 4.100 7.100-4.100M664.600 91.200v8.100" stroke="#b180d7" stroke-width="1.300" stroke-linejoin="round"/>
<path d="M1214.600 50.800l10.200 7-10.200 7z" stroke="#c5c5c5" stroke-width="1.500" stroke-linejoin="round"/>
<path d="M1255.600 55.500V50.700l9.500 6.100-6.200 4" stroke="#c5c5c5" stroke-width="1.500"/>
<ellipse cx="1252.2" cy="62.6" rx="2.8" ry="3.7" fill="none" stroke="#c5c5c5" stroke-width="1.2"/><path d="M1249.4 60.6h-2.0M1255.0 60.6h2.0M1249.4 62.8h-2.0M1255.0 62.8h2.0M1249.4 65.1h-2.0M1255.0 65.1h2.0M1249.7 60.5h5.1" stroke="#c5c5c5" stroke-width="1.02" fill="none"/>
<path d="M1290.400 49.700h12.200a1.500 1.500 0 0 1 1.500 1.500v11.600a1.500 1.500 0 0 1-1.500 1.500h-12.200a1.500 1.500 0 0 1-1.500-1.500V51.200a1.500 1.500 0 0 1 1.500-1.500zM1296.500 49.700v14.600" stroke="#c5c5c5" stroke-width="1.600"/>
<g fill="#c5c5c5"><circle cx="1328" cy="57.500" r="1.350"/><circle cx="1334.300" cy="57.500" r="1.350"/><circle cx="1340.500" cy="57.500" r="1.350"/></g>
<g stroke="#c5c5c5" stroke-width="1.500"><path d="M1131.900 530.700l4.600 4.600 4.600-4.600"/><path d="M1172.200 532h16M1180.200 524v16"/><path d="M1214 525.400h12a1.400 1.400 0 0 1 1.400 1.400v10.600a1.400 1.400 0 0 1-1.400 1.400h-12a1.400 1.400 0 0 1-1.400-1.400v-10.600a1.400 1.400 0 0 1 1.400-1.400zM1220 525.400v13.400"/><path d="M1249.600 527.300h14.200M1254 527.300v-2.700h5.400v2.700M1251.400 527.300v10.200a1.400 1.400 0 0 0 1.400 1.400h7.700a1.400 1.400 0 0 0 1.400-1.400v-10.200M1254.400 529.800v6.700M1256.700 529.800v6.700M1259 529.800v6.700"/><path d="M1290.400 535.700l5.800-6.100 5.800 6.100"/><path d="M1329.300 527.500l10.500 10.300M1339.800 527.500l-10.500 10.300"/></g>
<g stroke="#ffffff" stroke-width="1.450"><circle cx="26.700" cy="714.700" r="6.600"/><path d="M23.900 711.900l5.600 5.600M29.500 711.900l-5.600 5.600"/><path d="M59.250 708l6.900 12.200h-13.800zM59.250 712.300v4.300M59.250 717.600v1.300" stroke-linejoin="round"/><path d="M104.500 712.800v-3.700l9.200 5.600-5.600 3.600"/></g>
<ellipse cx="102.6" cy="718.6" rx="2.7" ry="3.6" fill="none" stroke="#ffffff" stroke-width="1.45"/><path d="M99.9 716.7h-1.9M105.3 716.7h1.9M99.9 718.8h-1.9M105.3 718.8h1.9M99.9 721.0h-1.9M105.3 721.0h1.9M100.2 716.6h4.8" stroke="#ffffff" stroke-width="1.23" fill="none"/>
<path d="M1142.300 714.200h3.200l3.400-4.900c.5-.7 2.100-.5 2.100.7l-.6 3.500h5c1 0 1.500.8 1.300 1.600l-1.400 4.600c-.2.700-.8 1.100-1.500 1.100h-8.300c-1.500 0-3.200-.6-3.200-2z" stroke="#ffffff" stroke-width="1.450" stroke-linejoin="round"/>
<g stroke="#ffffff" stroke-width="1.450"><circle cx="1267.450" cy="714.450" r="6.700"/><path d="M1267.450 713.600v4.600M1267.450 710.600v1.500"/></g>
<g stroke="#ffffff" stroke-width="1.450" stroke-linejoin="round"><circle cx="1301" cy="713.500" r="2.600"/><path d="M1296.200 721.500c.3-3 2.200-4.800 4.800-4.800s4.500 1.800 4.800 4.800"/><path d="M1303 708h8v6.200h-2.800l-2 2v-2"/></g>
<path d="M1334 719.300c1.400-1.200 1.800-2.400 1.800-4.300v-1.700a4.100 4.100 0 0 1 5.200-4M1344.300 714.500v.5c0 1.900.4 3.100 1.800 4.300zM1338.400 719.800a1.700 1.700 0 0 0 3.400 0M1334 719.300h12.100" stroke="#ffffff" stroke-width="1.450" stroke-linejoin="round"/><circle cx="1344.300" cy="709.800" r="3.100" fill="#ffffff"/>
</svg>
<div class="t" style='left:51.00px;top:9.00px;font:normal 15px "Liberation Sans",sans-serif;line-height:20px;color:#9d9d9d;letter-spacing:0.057px'>File</div>
<div class="t" style='left:93.00px;top:9.00px;font:normal 15px "Liberation Sans",sans-serif;line-height:20px;color:#9d9d9d;letter-spacing:0.107px'>Edit</div>
<div class="t" style='left:139.00px;top:9.00px;font:normal 15px "Liberation Sans",sans-serif;line-height:20px;color:#9d9d9d;letter-spacing:0.204px'>Selection</div>
<div class="t" style='left:221.60px;top:9.00px;font:normal 15px "Liberation Sans",sans-serif;line-height:20px;color:#9d9d9d;letter-spacing:0.230px'>View</div>
<div class="t" style='left:273.90px;top:9.00px;font:normal 15px "Liberation Sans",sans-serif;line-height:20px;color:#9d9d9d;letter-spacing:-0.567px'>Go</div>
<div class="t" style='left:312.20px;top:9.00px;font:normal 15px "Liberation Sans",sans-serif;line-height:20px;color:#9d9d9d;letter-spacing:0.113px'>Run</div>
<div class="t" style='left:359.30px;top:9.00px;font:normal 15px "Liberation Sans",sans-serif;line-height:20px;color:#9d9d9d;letter-spacing:0.136px'>Terminal</div>
<div class="t" style='left:435.50px;top:9.00px;font:normal 15px "Liberation Sans",sans-serif;line-height:20px;color:#9d9d9d;letter-spacing:0.631px'>Help</div>
<div class="t" style='left:617.50px;top:9.00px;font:normal 15px "Liberation Sans",sans-serif;line-height:20px;color:#989898;letter-spacing:-0.368px'>KayitListesi.java - 2. Ders - Visual Studio Code [Administrator]</div>
<div class="t" style='left:81.80px;top:47.70px;font:normal 11.8px "Liberation Sans",sans-serif;line-height:20px;color:#bbbbbb;letter-spacing:-0.561px'>EXPLORER</div>
<div class="t" style='left:81.80px;top:81.60px;font:bold 12.8px "Liberation Sans",sans-serif;line-height:20px;color:#d0d0d0;letter-spacing:-0.385px'>OPEN EDITORS</div>
<div class="t" style='left:81.80px;top:108.30px;font:bold 12.8px "Liberation Sans",sans-serif;line-height:20px;color:#d0d0d0;letter-spacing:-0.508px'>2. DERS</div>
<div class="t" style='left:125.50px;top:134.20px;font:normal 15px "Liberation Sans",sans-serif;line-height:20px;color:#cccccc;letter-spacing:0.055px'>cokBoyutluDizi.java</div>
<div class="t" style='left:125.50px;top:160.60px;font:normal 15px "Liberation Sans",sans-serif;line-height:20px;color:#cccccc;letter-spacing:-0.162px'>diziyeElemanEkleme.java</div>
<div class="t" style='left:124.50px;top:187.00px;font:normal 15px "Liberation Sans",sans-serif;line-height:20px;color:#cccccc;letter-spacing:-0.023px'>hashMap.java</div>
<div class="t" style='left:124.50px;top:213.40px;font:normal 15px "Liberation Sans",sans-serif;line-height:20px;color:#cca700;letter-spacing:-0.157px'>KayitListesi.java</div>
<div class="t" style='left:124.50px;top:239.80px;font:normal 15px "Liberation Sans",sans-serif;line-height:20px;color:#cccccc;letter-spacing:0.175px'>mapIciMapKullanimi.java</div>
<div class="t" style='left:125.50px;top:266.20px;font:normal 15px "Liberation Sans",sans-serif;line-height:20px;color:#cccccc;letter-spacing:0.051px'>tekBoyutluDizi.java</div>
<div class="t" style='left:336.90px;top:214.40px;font:normal 13.5px "Liberation Sans",sans-serif;line-height:20px;color:#b89500'>2</div>
<div class="t" style='left:81.80px;top:574.30px;font:bold 12.8px "Liberation Sans",sans-serif;line-height:20px;color:#d0d0d0;letter-spacing:-0.238px'>OUTLINE</div>
<div class="t" style='left:81.80px;top:600.70px;font:bold 12.8px "Liberation Sans",sans-serif;line-height:20px;color:#d0d0d0;letter-spacing:-0.162px'>NPM SCRIPTS</div>
<div class="t" style='left:81.80px;top:627.10px;font:bold 12.8px "Liberation Sans",sans-serif;line-height:20px;color:#d0d0d0;letter-spacing:-0.522px'>DEPENDENCIES</div>
<div class="t" style='left:81.80px;top:653.50px;font:bold 12.8px "Liberation Sans",sans-serif;line-height:20px;color:#d0d0d0;letter-spacing:-0.653px'>JAVA PROJECTS</div>
<div class="t" style='left:81.80px;top:679.90px;font:bold 12.8px "Liberation Sans",sans-serif;line-height:20px;color:#d0d0d0;letter-spacing:0.469px'>MAVEN</div>
<div class="t" style='left:401.20px;top:47.70px;font:normal 15px "Liberation Sans",sans-serif;line-height:20px;color:#ffffff;letter-spacing:-0.132px'>KayitListesi.java</div>
<div class="t" style='left:580.10px;top:47.70px;font:normal 15px "Liberation Sans",sans-serif;line-height:20px;color:#8d8d8d;letter-spacing:0.206px'>mapIciMapKullanimi.java</div>
<div class="t" style='left:408.80px;top:81.70px;font:normal 15px "Liberation Sans",sans-serif;line-height:20px;color:#a5a5a5;letter-spacing:-0.144px'>KayitListesi.java</div>
<div class="t" style='left:560.00px;top:81.70px;font:normal 15px "Liberation Sans",sans-serif;line-height:20px;color:#a5a5a5;letter-spacing:-0.021px'>KayitListesi</div>
<div class="t" style='left:681.00px;top:81.70px;font:normal 15px "Liberation Sans",sans-serif;line-height:20px;color:#a5a5a5;letter-spacing:0.023px'>kayitListele()</div>
<div class="t" style='left:387.70px;top:523.70px;font:normal 11.8px "Liberation Sans",sans-serif;line-height:20px;color:#8f8f8f;letter-spacing:-0.241px'>PROBLEMS</div>
<div class="t" style='left:469.40px;top:524.20px;font:normal 13px "Liberation Sans",sans-serif;line-height:20px;color:#ffffff'>2</div>
<div class="t" style='left:507.20px;top:523.70px;font:normal 11.8px "Liberation Sans",sans-serif;line-height:20px;color:#e7e7e7;letter-spacing:0.202px'>TERMINAL</div>
<div class="t" style='left:593.20px;top:523.70px;font:normal 11.8px "Liberation Sans",sans-serif;line-height:20px;color:#8f8f8f;letter-spacing:-0.404px'>REFACTOR PREVIEW</div>
<div class="t" style='left:958.70px;top:524.40px;font:normal 15px "Liberation Sans",sans-serif;line-height:20px;color:#f0f0f0;letter-spacing:-0.040px'>4: Java Process Console</div>
<div class="t" style='left:39.60px;top:705.70px;font:normal 13.9px "Liberation Sans",sans-serif;line-height:20px;color:#ffffff'>0</div>
<div class="t" style='left:72.10px;top:705.70px;font:normal 13.9px "Liberation Sans",sans-serif;line-height:20px;color:#ffffff'>2</div>
<div class="t" style='left:808.10px;top:705.70px;font:normal 13.9px "Liberation Sans",sans-serif;line-height:20px;color:#ffffff;letter-spacing:-0.084px'>Ln 63, Col 22</div>
<div class="t" style='left:909.40px;top:705.70px;font:normal 13.9px "Liberation Sans",sans-serif;line-height:20px;color:#ffffff;letter-spacing:-0.469px'>Spaces: 4</div>
<div class="t" style='left:986.10px;top:705.70px;font:normal 13.9px "Liberation Sans",sans-serif;line-height:20px;color:#ffffff;letter-spacing:-0.157px'>UTF-8</div>
<div class="t" style='left:1044.30px;top:705.70px;font:normal 13.9px "Liberation Sans",sans-serif;line-height:20px;color:#ffffff;letter-spacing:-1.663px'>CRLF</div>
<div class="t" style='left:1094.90px;top:705.70px;font:normal 13.9px "Liberation Sans",sans-serif;line-height:20px;color:#ffffff;letter-spacing:-1.039px'>Java</div>
<div class="t" style='left:1177.30px;top:705.70px;font:normal 13.9px "Liberation Sans",sans-serif;line-height:20px;color:#ffffff;letter-spacing:-0.786px'>JavaSE-11</div>
<div class="t" style='left:1267.00px;top:728.60px;font:normal 11.6px "Liberation Sans",sans-serif;line-height:20px;color:#ffffff;letter-spacing:-0.626px'>15:11</div>
<div class="t" style='left:1254.40px;top:746.70px;font:normal 11.6px "Liberation Sans",sans-serif;line-height:20px;color:#ffffff;letter-spacing:-0.686px'>10.01.2021</div>
<div class="a" style="left:538px;top:242.5px;width:291px;height:237.5px;background:#eeeeee;border:1px solid #fff;box-shadow:0 2px 10px 1px rgba(0,0,0,.42)"></div>
<div class="a" style="left:538px;top:242.5px;width:291px;height:29.5px;background:#ffffff;"></div>
<svg style="left:808px;top:250px" width="12" height="12" viewBox="0 0 12 12"><path d="M.9 1.200l10.400 9.800M11.300 1.200L.9 11" stroke="#000" stroke-width="1.050" fill="none"/></svg>
<div class="a" style="left:549.2px;top:282px;width:26.8px;height:26.800px;background:#9ccb9c;border:1px solid #5f8f5f;box-shadow:2px 3px 4px rgba(0,0,0,.32)"></div>
<div class="t" style="left:549.2px;top:283.3px;width:26.800px;height:24px;line-height:24px;text-align:center;font:bold 22.500px &quot;Liberation Sans&quot;,sans-serif;color:#004d00;-webkit-text-stroke:.7px #004d00;text-shadow:0 0 1.500px #d4ffd4,0 0 1.500px #d4ffd4,0 0 2px #c8ffc8">?</div>
<div class="a" style="left:595.2px;top:413.4px;width:223.2px;height:18.8px;background:#fff;border:1px solid #7a8a99;box-shadow:inset 1px 1px 0 #b8cfe5"></div>
<div class="a" style="left:597.5px;top:416px;width:1px;height:14px;background:#222;"></div>
<div class="a" style="left:619px;top:442px;width:61px;height:26px;background:linear-gradient(#ffffff 0%,#e6eef7 45%,#c9daec 100%);border:1px solid #5c6f84;box-shadow:inset 0 0 0 1px #8ea3ba"></div>
<div class="a" style="left:686px;top:442px;width:61px;height:26px;background:linear-gradient(#ffffff 0%,#e6eef7 45%,#c9daec 100%);border:1px solid #7a8a99"></div>
<div class="t" style='left:545.40px;top:246.50px;font:normal 11.6px "Liberation Sans",sans-serif;line-height:20px;color:#000000;letter-spacing:0.459px'>Input</div>
<div class="t" style='left:595.40px;top:280.80px;font:bold 12px "Liberation Sans",sans-serif;line-height:20px;color:#383838;letter-spacing:-0.111px'>Lütfen Seçim Yapınız:</div>
<div class="t" style='left:595.40px;top:300.30px;font:bold 12px "Liberation Sans",sans-serif;line-height:20px;color:#383838;letter-spacing:0.069px'>************************</div>
<div class="t" style='left:595.40px;top:336.00px;font:bold 12px "Liberation Sans",sans-serif;line-height:20px;color:#383838;letter-spacing:-0.146px'>[1] Öğrenci Ekle</div>
<div class="t" style='left:595.40px;top:355.00px;font:bold 12px "Liberation Sans",sans-serif;line-height:20px;color:#383838;letter-spacing:-0.123px'>[2] Öğrenci Sil</div>
<div class="t" style='left:595.40px;top:374.00px;font:bold 12px "Liberation Sans",sans-serif;line-height:20px;color:#383838;letter-spacing:-0.031px'>[3] Öğrenci Listesi</div>
<div class="t" style='left:595.40px;top:393.00px;font:bold 12px "Liberation Sans",sans-serif;line-height:20px;color:#383838;letter-spacing:-0.171px'>[0 veya Cancel] Çıkış</div>
<div class="t" style='left:640.80px;top:446.10px;font:bold 12px "Liberation Sans",sans-serif;line-height:20px;color:#383838;letter-spacing:-0.834px'>OK</div>
<div class="t" style='left:696.90px;top:446.10px;font:bold 12px "Liberation Sans",sans-serif;line-height:20px;color:#383838;letter-spacing:0.016px'>Cancel</div>
</body></html>
